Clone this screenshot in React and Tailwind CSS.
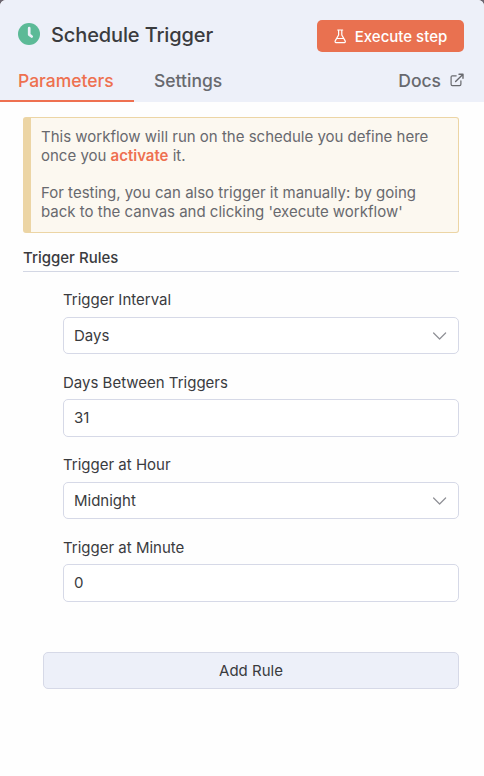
function ClockIcon() {
  return (
    <svg className="mb-px h-[22px] w-[22px] shrink-0" viewBox="0 0 22 22" fill="none">
      <circle cx="11" cy="11" r="11" fill="#5cba97" />
      <path d="M11.2 5.2v6.4l2.5 1.9" stroke="#edf0f9" strokeWidth="2.7" strokeLinecap="round" strokeLinejoin="round" />
    </svg>
  );
}

function FlaskIcon() {
  return (
    <svg className="mt-px h-[15px] w-[13px] shrink-0" viewBox="0 0 13 15" fill="none" stroke="currentColor" strokeWidth="1.2" strokeLinecap="round" strokeLinejoin="round">
      <path d="M3.7 1h5M4.6 1v5L1.2 11.9c-.4.9 0 1.7.8 1.7h8.4c.8 0 1.2-.8.8-1.7L7.8 6V1M3 9.5h6.6" />
    </svg>
  );
}

function ExternalIcon() {
  return (
    <svg className="mb-[3px] h-[14px] w-[14px] shrink-0" viewBox="0 0 14 14" fill="none" stroke="currentColor" strokeWidth="1.2" strokeLinecap="round" strokeLinejoin="round">
      <path d="M9 1.2h4v4M12.8 1.4 5.6 8.6" strokeWidth="1.4" />
      <path d="M6.2 2.8H2.4c-.8 0-1.3.5-1.3 1.3v7.2c0 .8.5 1.3 1.3 1.3h7.2c.8 0 1.3-.5 1.3-1.3V7.8" />
    </svg>
  );
}

function ChevronIcon() {
  return (
    <svg className="h-2 w-[14px] shrink-0" viewBox="0 0 14 8" fill="none" stroke="#8f9096" strokeWidth="1.2" strokeLinecap="round" strokeLinejoin="round">
      <path d="M.6 1l6 6 6-6" />
    </svg>
  );
}

function Field({ label, value, select, className }) {
  return (
    <div className={className}>
      <div className="h-[19px] text-[15px] leading-[19px]">{label}</div>
      <div
        className={
          select
            ? "mt-2 flex h-[37px] items-center justify-between rounded-[5px] border border-[#d6d9e7] bg-white pr-[11px] pl-[10px] text-[15px] leading-[19px]"
            : "mt-[7px] flex h-[38px] items-center rounded-[5px] border border-[#d6d9e7] bg-white pb-px pl-[10px] text-[15px] leading-[19px]"
        }
      >
        <span>{value}</span>
        {select && <ChevronIcon />}
      </div>
    </div>
  );
}

export default function App() {
  return (
    <div className="h-[776px] w-[484px] overflow-hidden bg-[#6c6670] font-['Inter',sans-serif] text-[#3a3b3e]">
      <div className="h-full rounded-t-[6px] bg-[#fefefe]">
        <header className="h-[102px] rounded-t-[6px] bg-[#edf0f9]">
          <div className="flex h-[60px] items-center pt-[12px] pr-5 pl-[18px]">
            <div className="flex items-center gap-[11px] pb-[3px]">
              <ClockIcon />
              <h1 className="text-[20px] leading-6 font-medium tracking-[-0.12px]">Schedule Trigger</h1>
            </div>
            <button className="ml-auto flex h-8 w-[147px] items-center justify-center gap-[8px] rounded-[5px] bg-[#e97150] text-[15px] font-medium text-white">
              <FlaskIcon />
              <span className="pt-[2px]">Execute step</span>
            </button>
          </div>
          <nav className="flex h-[42px] pr-5 text-[17.5px] leading-[42px] font-medium text-[#68696e]">
            <a className="w-[134px] border-b-2 border-[#ee7050] pl-[18px] text-[#ee7050]">Parameters</a>
            <a className="pl-5">Settings</a>
            <a className="ml-auto flex items-center gap-[9px]">
              Docs
              <ExternalIcon />
            </a>
          </nav>
        </header>

        <main className="pt-[15px] pr-[25px] pl-[23px]">
          <div className="h-[116px] rounded-[3px] border border-l-8 border-[#ecd5a5] bg-[#fcf8f0] pt-[9px] pl-[10px] text-[15px] leading-[19px] text-[#68696e]">
            <p>
              This workflow will run on the schedule you define here
              <br />
              once you <b className="font-semibold text-[#ee7050]">activate</b> it.
            </p>
            <p className="mt-[18px]">
              For testing, you can also trigger it manually: by going
              <br />
              back to the canvas and clicking 'execute workflow'
            </p>
          </div>

          <h2 className="mt-[15px] h-[24px] border-b border-[#d3d7e4] text-[15px] leading-[20px] font-medium">Trigger Rules</h2>

          <div className="pl-10">
            <Field className="mt-[18px]" label="Trigger Interval" value="Days" select />
            <Field className="mt-[19px]" label="Days Between Triggers" value="31" />
            <Field className="mt-[18px]" label="Trigger at Hour" value="Midnight" select />
            <Field className="mt-[19px]" label="Trigger at Minute" value="0" />
          </div>

          <div className="mt-[50px] pl-5">
            <button className="block h-[37px] w-full rounded-[5px] border border-[#d6d9e7] bg-[#edf0f9] pt-px text-[15px] font-normal">
              Add Rule
            </button>
          </div>
        </main>
      </div>
    </div>
  );
}
